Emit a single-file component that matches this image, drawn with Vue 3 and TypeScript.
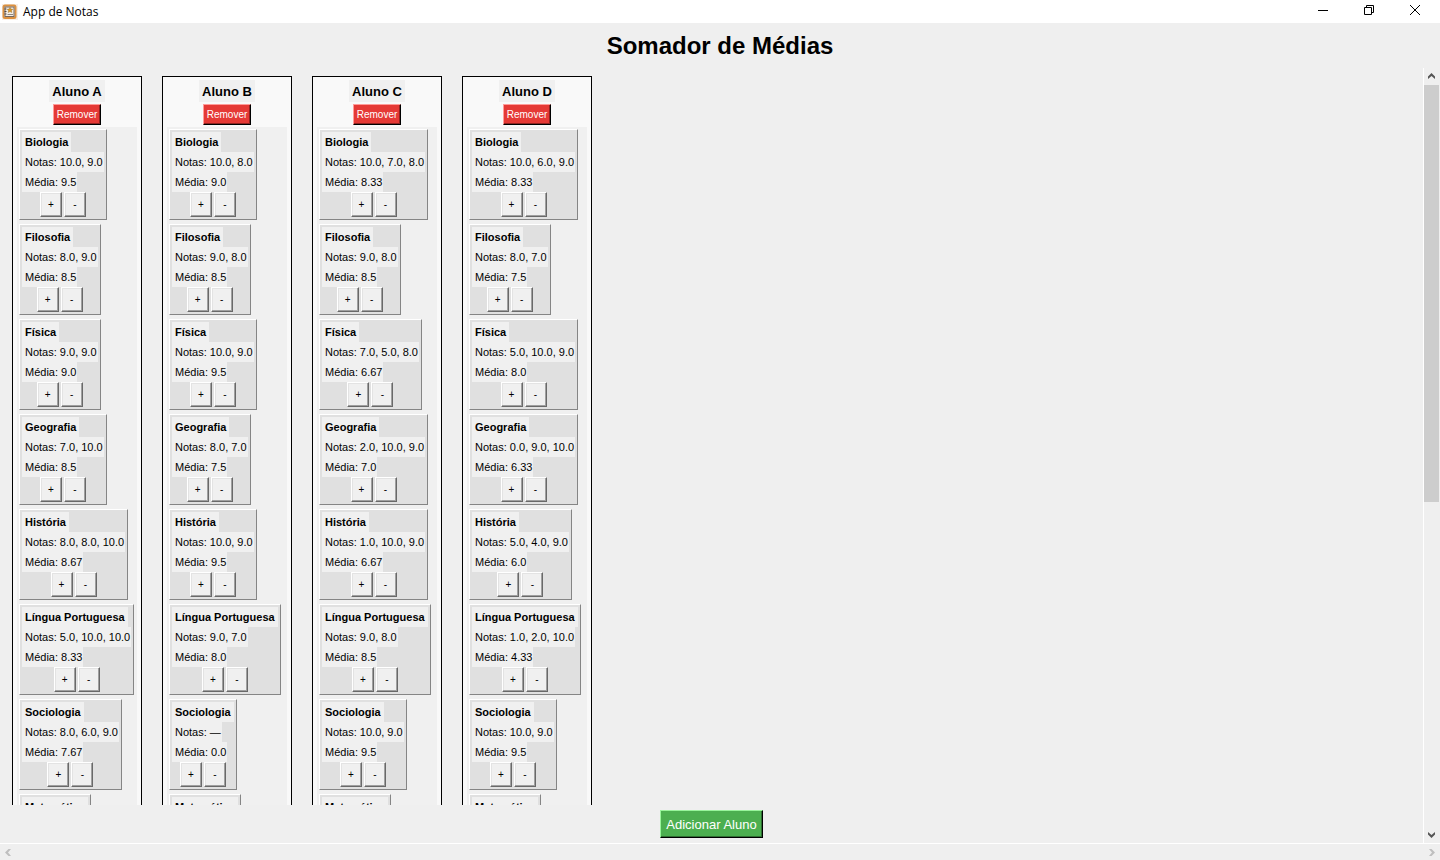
<script setup lang="ts">
interface Subject {
  name: string
  grades: string
  average: string
}

interface Student {
  name: string
  subjects: Subject[]
}

const subjectNames = [
  'Biologia',
  'Filosofia',
  'Física',
  'Geografia',
  'História',
  'Língua Portuguesa',
  'Sociologia',
  'Matemática',
]

function student(name: string, results: [string, string][]): Student {
  return {
    name,
    subjects: results.map(([grades, average], i) => ({ name: subjectNames[i], grades, average })),
  }
}

const students: Student[] = [
  student('Aluno A', [
    ['10.0, 9.0', '9.5'],
    ['8.0, 9.0', '8.5'],
    ['9.0, 9.0', '9.0'],
    ['7.0, 10.0', '8.5'],
    ['8.0, 8.0, 10.0', '8.67'],
    ['5.0, 10.0, 10.0', '8.33'],
    ['8.0, 6.0, 9.0', '7.67'],
    ['—', '0.0'],
  ]),
  student('Aluno B', [
    ['10.0, 8.0', '9.0'],
    ['9.0, 8.0', '8.5'],
    ['10.0, 9.0', '9.5'],
    ['8.0, 7.0', '7.5'],
    ['10.0, 9.0', '9.5'],
    ['9.0, 7.0', '8.0'],
    ['—', '0.0'],
    ['—', '0.0'],
  ]),
  student('Aluno C', [
    ['10.0, 7.0, 8.0', '8.33'],
    ['9.0, 8.0', '8.5'],
    ['7.0, 5.0, 8.0', '6.67'],
    ['2.0, 10.0, 9.0', '7.0'],
    ['1.0, 10.0, 9.0', '6.67'],
    ['9.0, 8.0', '8.5'],
    ['10.0, 9.0', '9.5'],
    ['—', '0.0'],
  ]),
  student('Aluno D', [
    ['10.0, 6.0, 9.0', '8.33'],
    ['8.0, 7.0', '7.5'],
    ['5.0, 10.0, 9.0', '8.0'],
    ['0.0, 9.0, 10.0', '6.33'],
    ['5.0, 4.0, 9.0', '6.0'],
    ['1.0, 2.0, 10.0', '4.33'],
    ['10.0, 9.0', '9.5'],
    ['—', '0.0'],
  ]),
]
</script>

<template>
  <div class="window">
    <header class="titlebar">
      <svg class="app-icon" width="16" height="16" viewBox="0 0 16 16" aria-hidden="true">
        <rect width="16" height="16" fill="#f8eee4" />
        <rect x="1.5" y="1.5" width="12" height="12.5" rx="1.5" fill="#f1e9e0" stroke="#dc9140" stroke-width="2" />
        <rect x="3" y="3" width="9" height="9.5" fill="#f4eee6" stroke="#75675c" stroke-width="1" />
        <path d="M2.5 5H4.5M2.5 7.5H4.5M2.5 10H4.5" stroke="#4d4744" stroke-width="1" />
        <path d="M8 3.4l.9 1.7 1.9.2-1.4 1.3.4 1.9L8 7.6l-1.8.9.4-1.9-1.4-1.3 1.9-.2z" fill="#e09a1f" stroke="#8a5f22" stroke-width="0.4" />
        <path d="M5.5 10.5H11" stroke="#8f8780" stroke-width="1" />
      </svg>
      <span class="app-name">App de Notas</span>
      <div class="window-controls">
        <button type="button" aria-label="Minimizar">
          <svg width="10" height="10" viewBox="0 0 10 10"><path d="M0 5.5H10" /></svg>
        </button>
        <button type="button" aria-label="Restaurar">
          <svg width="10" height="10" viewBox="0 0 10 10"><path d="M.5 2.5H7.5V9.5H.5ZM2.5 2.5V.5H9.5V7.5H7.5" /></svg>
        </button>
        <button type="button" aria-label="Fechar">
          <svg width="10" height="10" viewBox="0 0 10 10"><path d="M0 0L10 10M10 0L0 10" /></svg>
        </button>
      </div>
    </header>

    <h1>Somador de Médias</h1>

    <div class="body">
      <main class="viewport">
        <div class="students">
          <section v-for="s in students" :key="s.name" class="student">
            <h2>{{ s.name }}</h2>
            <button type="button" class="remove">Remover</button>
            <div class="subjects">
              <article v-for="m in s.subjects" :key="m.name" class="subject">
                <h3 class="label">{{ m.name }}</h3>
                <p class="label">Notas: {{ m.grades }}</p>
                <p class="label">Média: {{ m.average }}</p>
                <div class="actions">
                  <button type="button">+</button>
                  <button type="button">-</button>
                </div>
              </article>
            </div>
          </section>
        </div>
        <button type="button" class="add">Adicionar Aluno</button>
      </main>

      <div class="vbar">
        <button type="button" aria-label="Rolar para cima">
          <svg width="7" height="7" viewBox="0 0 7 7"><path d="M0 6V3.5L3.5 0L7 3.5V6L3.5 3Z" /></svg>
        </button>
        <div class="track"><div class="thumb"></div></div>
        <button type="button" aria-label="Rolar para baixo">
          <svg width="7" height="7" viewBox="0 0 7 7"><path d="M0 1V3.5L3.5 7L7 3.5V1L3.5 4Z" /></svg>
        </button>
      </div>
    </div>

    <div class="hbar">
      <button type="button" disabled aria-label="Rolar para a esquerda">
        <svg width="7" height="7" viewBox="0 0 7 7"><path d="M6 0H3.5L0 3.5L3.5 7H6L3 3.5Z" /></svg>
      </button>
      <button type="button" disabled aria-label="Rolar para a direita">
        <svg width="7" height="7" viewBox="0 0 7 7"><path d="M1 0H3.5L7 3.5L3.5 7H1L4 3.5Z" /></svg>
      </button>
    </div>
  </div>
</template>

<style>
body {
  margin: 0;
  background: #efefef;
}
</style>

<style scoped>
.window {
  display: flex;
  flex-direction: column;
  height: 100vh;
  overflow: hidden;
  background: #efefef;
  color: #000;
  font-family: "Liberation Sans", Arial, sans-serif;
  font-size: 11px;
}

h1,
h2,
h3,
p {
  margin: 0;
}

button {
  box-sizing: border-box;
  margin: 0;
  padding: 0;
  border: 0;
  background: none;
  color: inherit;
  font: inherit;
}

svg {
  display: block;
  fill: none;
}

.titlebar {
  display: flex;
  flex: none;
  align-items: center;
  height: 23px;
  padding-left: 2px;
  background: #fff;
}

.app-name {
  margin-left: 5px;
  font: 12px/22px "Open Sans", "Noto Sans", sans-serif;
}

.window-controls {
  display: flex;
  align-self: stretch;
  margin-left: auto;
}

.window-controls button {
  display: flex;
  align-items: center;
  justify-content: center;
  width: 46px;
  padding-bottom: 3px;
  padding-right: 4px;
}

.window-controls svg {
  stroke: #000;
  stroke-width: 1;
}

h1 {
  flex: none;
  font-size: 24px;
  line-height: 45px;
  text-align: center;
}

.body {
  display: flex;
  flex: 1;
  min-height: 0;
}

.viewport {
  display: flex;
  flex: 1;
  flex-direction: column;
  align-items: center;
  min-width: 0;
}

.students {
  display: flex;
  flex: 1;
  align-self: stretch;
  gap: 20px;
  min-height: 0;
  padding: 8px 12px 0;
  overflow: auto;
  scrollbar-width: none;
}

.student {
  display: flex;
  flex: none;
  flex-direction: column;
  align-items: center;
  box-sizing: border-box;
  width: 130px;
  height: max-content;
  padding: 3px 4px;
  border: 1px solid #000;
  background: #f9f9f9;
}

h2 {
  padding: 2px 3px 0;
  background: #f0f0f0;
  font-size: 13px;
  line-height: 20px;
}

.remove {
  width: 48px;
  height: 21px;
  margin: 2px 0;
  border: 1px solid #000;
  border-top-color: #ff9b98;
  border-left-color: #ff9b98;
  background: #e53935;
  box-shadow: inset -1px -1px #8f2321;
  color: #fff;
  font-size: 10px;
}

.subjects {
  display: flex;
  flex-direction: column;
  align-items: flex-start;
  align-self: stretch;
  gap: 4px;
  padding: 2px;
  background: #f0f0f0;
}

.subject {
  display: flex;
  flex-direction: column;
  align-items: flex-start;
  padding: 2px;
  border: 1px solid #858585;
  border-top-color: #fff;
  border-left-color: #fff;
  background: #e0e0e0;
}

.label {
  padding: 0 3px;
  background: #f0f0f0;
  font-size: 11px;
  line-height: 20px;
  white-space: nowrap;
}

p.label {
  padding-right: 1px;
}

.actions {
  display: flex;
  gap: 2px;
  align-self: center;
}

.actions button {
  width: 22px;
  height: 25px;
  border: 1px solid #696969;
  border-top-color: #fff;
  border-left-color: #fff;
  background: #f0f0f0;
  box-shadow: inset -1px -1px #a0a0a0, inset 1px 1px #e3e3e3;
  font-size: 10px;
}

.add {
  flex: none;
  width: 103px;
  height: 28px;
  margin: 5px 0;
  border: 1px solid #000;
  border-top-color: #98f59b;
  border-left-color: #98f59b;
  background: #4caf50;
  box-shadow: inset -1px -1px #2f6e32;
  color: #fff;
  font-size: 13px;
}

.vbar {
  display: flex;
  flex: none;
  flex-direction: column;
  width: 16px;
  border-left: 1px solid #fff;
}

.vbar button {
  display: flex;
  flex: none;
  align-items: center;
  justify-content: center;
  height: 17px;
  padding-right: 1px;
}

.vbar svg {
  fill: #555;
}

.track {
  flex: 1;
  padding-right: 1px;
}

.thumb {
  height: 56.3%;
  background: #cdcdcd;
}

.hbar {
  display: flex;
  flex: none;
  align-items: center;
  justify-content: space-between;
  height: 16px;
  border-top: 1px solid #fff;
}

.hbar button {
  display: flex;
  align-items: center;
  justify-content: center;
  width: 17px;
  height: 16px;
}

.hbar svg {
  fill: #bfbfbf;
}
</style>
